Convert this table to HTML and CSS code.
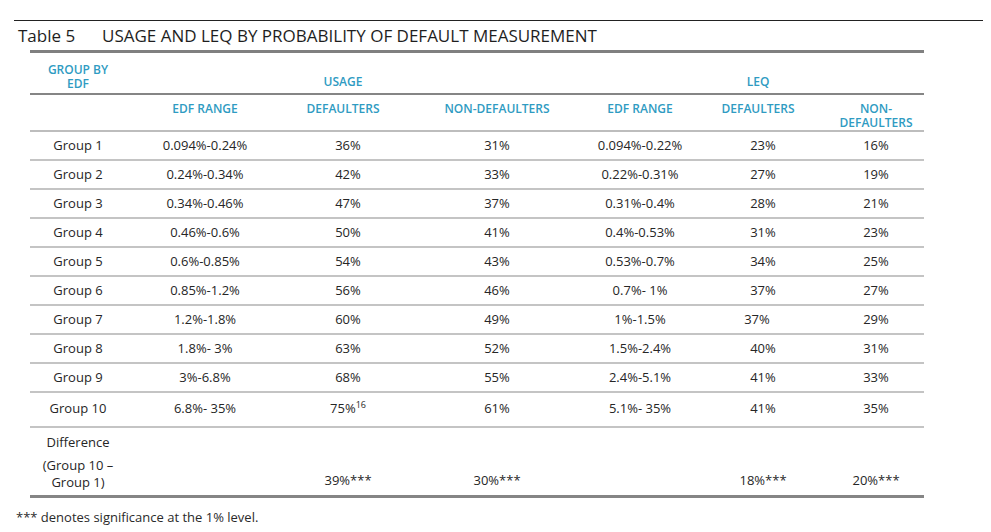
FILE: index.html
```html
<!DOCTYPE html>
<html>
<head>
<meta charset="utf-8">
<link rel="stylesheet" href="styles.css">
</head>
<body>
<div class="page">
  <div class="title-bar">
    <span class="tnum">Table 5</span>
    <span class="ttext">USAGE AND LEQ BY PROBABILITY OF DEFAULT MEASUREMENT</span>
  </div>
  <table class="data">
    <colgroup>
      <col class="c1"><col class="c2"><col class="c3"><col class="c4"><col class="c5"><col class="c6"><col class="c7">
    </colgroup>
    <thead>
      <tr class="h1">
        <th class="grp">GROUP BY<br>EDF</th>
        <th></th>
        <th class="sh-left">USAGE</th>
        <th></th>
        <th></th>
        <th class="sh-left">LEQ</th>
        <th></th>
      </tr>
      <tr class="h2">
        <th></th>
        <th>EDF RANGE</th>
        <th class="sh-left">DEFAULTERS</th>
        <th>NON-DEFAULTERS</th>
        <th>EDF RANGE</th>
        <th class="sh-left">DEFAULTERS</th>
        <th>NON-<br>DEFAULTERS</th>
      </tr>
    </thead>
    <tbody>
      <tr><td>Group 1</td><td>0.094%-0.24%</td><td>36%</td><td>31%</td><td>0.094%-0.22%</td><td>23%</td><td>16%</td></tr>
      <tr><td>Group 2</td><td>0.24%-0.34%</td><td>42%</td><td>33%</td><td>0.22%-0.31%</td><td>27%</td><td>19%</td></tr>
      <tr><td>Group 3</td><td>0.34%-0.46%</td><td>47%</td><td>37%</td><td>0.31%-0.4%</td><td>28%</td><td>21%</td></tr>
      <tr><td>Group 4</td><td>0.46%-0.6%</td><td>50%</td><td>41%</td><td>0.4%-0.53%</td><td>31%</td><td>23%</td></tr>
      <tr><td>Group 5</td><td>0.6%-0.85%</td><td>54%</td><td>43%</td><td>0.53%-0.7%</td><td>34%</td><td>25%</td></tr>
      <tr><td>Group 6</td><td>0.85%-1.2%</td><td>56%</td><td>46%</td><td>0.7%- 1%</td><td>37%</td><td>27%</td></tr>
      <tr><td>Group 7</td><td>1.2%-1.8%</td><td>60%</td><td>49%</td><td>1%-1.5%</td><td class="nudge">37%</td><td>29%</td></tr>
      <tr><td>Group 8</td><td>1.8%- 3%</td><td>63%</td><td>52%</td><td>1.5%-2.4%</td><td>40%</td><td>31%</td></tr>
      <tr><td>Group 9</td><td>3%-6.8%</td><td>68%</td><td>55%</td><td>2.4%-5.1%</td><td>41%</td><td>33%</td></tr>
      <tr class="tall"><td>Group 10</td><td>6.8%- 35%</td><td class="sup-cell">75%<sup>16</sup></td><td>61%</td><td>5.1%- 35%</td><td>41%</td><td>35%</td></tr>
      <tr class="diff">
        <td class="diff-label"><div class="dl1">Difference</div><div>(Group 10 –</div><div>Group 1)</div></td>
        <td></td>
        <td class="dv">39%***</td>
        <td class="dv">30%***</td>
        <td></td>
        <td class="dv">18%***</td>
        <td class="dv">20%***</td>
      </tr>
    </tbody>
  </table>
  <p class="note">*** denotes significance at the 1% level.</p>
</div>
</body>
</html>
```
FILE: styles.css
```css
html, body {
  margin: 0;
  padding: 0;
  background: #fff;
}
body {
  font-family: "Open Sans", "Noto Sans", sans-serif;
  color: #222;
}
.page {
  padding-top: 20px;
}
.title-bar {
  margin: 0 8px 0 14px;
  border-top: 1px solid #222;
  height: 30px;
  display: flex;
  align-items: center;
  font-size: 17px;
  color: #1e1e1e;
  padding-left: 4px;
  padding-bottom: 1px;
  box-sizing: border-box;
}
.tnum {
  width: 84px;
}
.data {
  margin-left: 30px;
  width: 894px;
  border-collapse: collapse;
  table-layout: fixed;
  border-top: 3px solid #808080;
  font-size: 13px;
}
.c1 { width: 96px; }
.c2 { width: 158px; }
.c3 { width: 128px; }
.c4 { width: 170px; }
.c5 { width: 116px; }
.c6 { width: 130px; }
.c7 { width: 96px; }
th {
  color: #2f9bc2;
  font-weight: 600;
  font-size: 12px;
  line-height: 14px;
  text-align: center;
  padding: 0;
}
.h1 th {
  height: 36px;
  vertical-align: bottom;
  padding-bottom: 4px;
  border-bottom: 2px solid #858585;
}
.h1 th.grp {
  height: 30px;
  vertical-align: top;
  padding-top: 10px;
  padding-bottom: 0;
}
.h2 th {
  height: 27px;
  vertical-align: top;
  padding-top: 7px;
  border-bottom: 2px solid #bdbdbd;
}
.sh-left {
  padding-right: 10px !important;
}
td {
  text-align: center;
  padding: 0 0 2px;
  height: 25px;
  border-bottom: 2px solid #c4c4c4;
  vertical-align: middle;
  color: #262626;
}
td.nudge {
  padding-right: 12px;
}
tr.tall td {
  height: 29px;
  padding-bottom: 4px;
}
sup {
  font-size: 9px;
  vertical-align: 5px;
  line-height: 0;
}
tr.diff td {
  height: 61px;
  border-bottom: 3px solid #858585;
  vertical-align: bottom;
  padding-bottom: 6px;
  line-height: 17px;
}
tr.diff td.diff-label {
  height: 63px;
  padding-bottom: 4px;
}
.dl1 {
  margin-bottom: 6px;
}
.note {
  margin: 10px 0 0 16px;
  font-size: 13px;
  color: #2a2a2a;
}
```
